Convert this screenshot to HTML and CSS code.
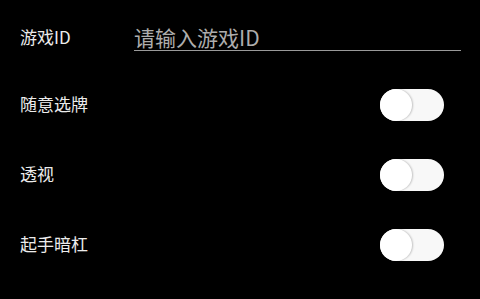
FILE: index.html
```html
<!DOCTYPE html>
<html lang="zh-CN">
<head>
<meta charset="utf-8">
<link rel="stylesheet" href="styles.css">
</head>
<body>
<div class="panel">
  <div class="row row-input">
    <span class="label">游戏ID</span>
    <input class="field" type="text" placeholder="请输入游戏ID">
  </div>
  <div class="row">
    <span class="label">随意选牌</span>
    <span class="switch"><span class="thumb"></span></span>
  </div>
  <div class="row">
    <span class="label">透视</span>
    <span class="switch"><span class="thumb"></span></span>
  </div>
  <div class="row">
    <span class="label">起手暗杠</span>
    <span class="switch"><span class="thumb"></span></span>
  </div>
</div>
</body>
</html>
```
FILE: styles.css
```css
html, body {
  margin: 0;
  padding: 0;
  background: #000;
}
body {
  width: 480px;
  height: 299px;
  overflow: hidden;
  font-family: "Noto Sans CJK SC", "Noto Sans", sans-serif;
  color: #ececec;
}
.panel {
  display: flex;
  flex-direction: column;
  padding: 0 19px 0 20px;
}
.row {
  height: 70px;
  display: flex;
  align-items: center;
  justify-content: space-between;
  padding-right: 17px;
}
.row-input {
  height: 70px;
  box-sizing: border-box;
  padding: 24px 0 0 0;
  align-items: flex-start;
  justify-content: flex-start;
}
.label {
  font-size: 17px;
  line-height: 24px;
  margin-top: -2px;
}
.row-input .label {
  width: 114px;
  margin-top: 1px;
}
.field {
  flex: 1;
  height: 26px;
  box-sizing: content-box;
  padding: 0;
  margin: 0;
  border: 0;
  border-bottom: 1px solid #9a9a9a;
  background: transparent;
  outline: none;
  font-family: "Noto Sans CJK SC", "Noto Sans", sans-serif;
  font-size: 21px;
  color: #ddd;
}
.field::placeholder {
  color: #adadad;
}
.switch {
  width: 64px;
  height: 32px;
  border-radius: 16px;
  background: #f8f8f8;
  display: flex;
  align-items: center;
}
.thumb {
  width: 32px;
  height: 32px;
  border-radius: 50%;
  background: #fff;
  box-shadow: 1px 0 2px rgba(0, 0, 0, 0.22);
}
```
